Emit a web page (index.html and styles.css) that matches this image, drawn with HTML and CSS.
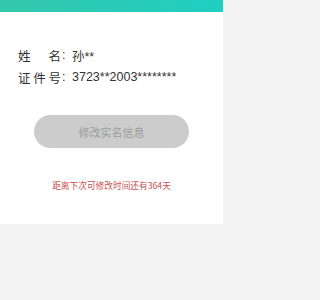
FILE: index.html
```html
<!DOCTYPE html>
<html lang="zh">
<head>
<meta charset="utf-8">
<link rel="stylesheet" href="styles.css">
</head>
<body>
<div class="page">
  <div class="topbar"></div>
  <main class="card">
    <div class="info">
      <div class="row">
        <span class="label"><span>姓</span><span>名</span></span><span class="colon">:</span>
        <span class="value">孙**</span>
      </div>
      <div class="row">
        <span class="label"><span>证</span><span>件</span><span>号</span></span><span class="colon">:</span>
        <span class="value">3723**2003********</span>
      </div>
    </div>
    <div class="btn">修改实名信息</div>
    <p class="notice">距离下次可修改时间还有364天</p>
  </main>
</div>
</body>
</html>
```

FILE: styles.css
```css
html, body {
  margin: 0;
  padding: 0;
  background: #f4f4f4;
}
body {
  font-family: "Noto Sans CJK SC", sans-serif;
  height: 300px;
  overflow: hidden;
}
.page {
  width: 223px;
}
.topbar {
  height: 12px;
  background: linear-gradient(90deg, #34c8ad 0%, #20cfc2 100%);
}
.card {
  background: #fff;
  height: 212px;
  box-sizing: border-box;
  padding-top: 34px;
  display: flex;
  flex-direction: column;
}
.info {
  padding-left: 18px;
  display: flex;
  flex-direction: column;
  gap: 4px;
}
.row {
  display: flex;
  align-items: center;
  height: 18px;
  font-size: 12.5px;
  color: #333;
}
.label {
  display: flex;
  justify-content: space-between;
  width: 43px;
}
.colon {
  width: 10px;
  padding-left: 1px;
  font-family: "Liberation Sans", sans-serif;
}
.value {
  font-family: "Liberation Sans", "Noto Sans CJK SC", sans-serif;
  font-size: 12.5px;
}
.btn {
  margin: 29px auto 0;
  width: 155px;
  height: 33px;
  border-radius: 17px;
  background: #cccccc;
  color: #9c9c9c;
  font-size: 11px;
  display: flex;
  align-items: center;
  justify-content: center;
}
.notice {
  margin: 31px 0 0;
  text-align: center;
  font-size: 8.7px;
  color: #c9504f;
}
```
